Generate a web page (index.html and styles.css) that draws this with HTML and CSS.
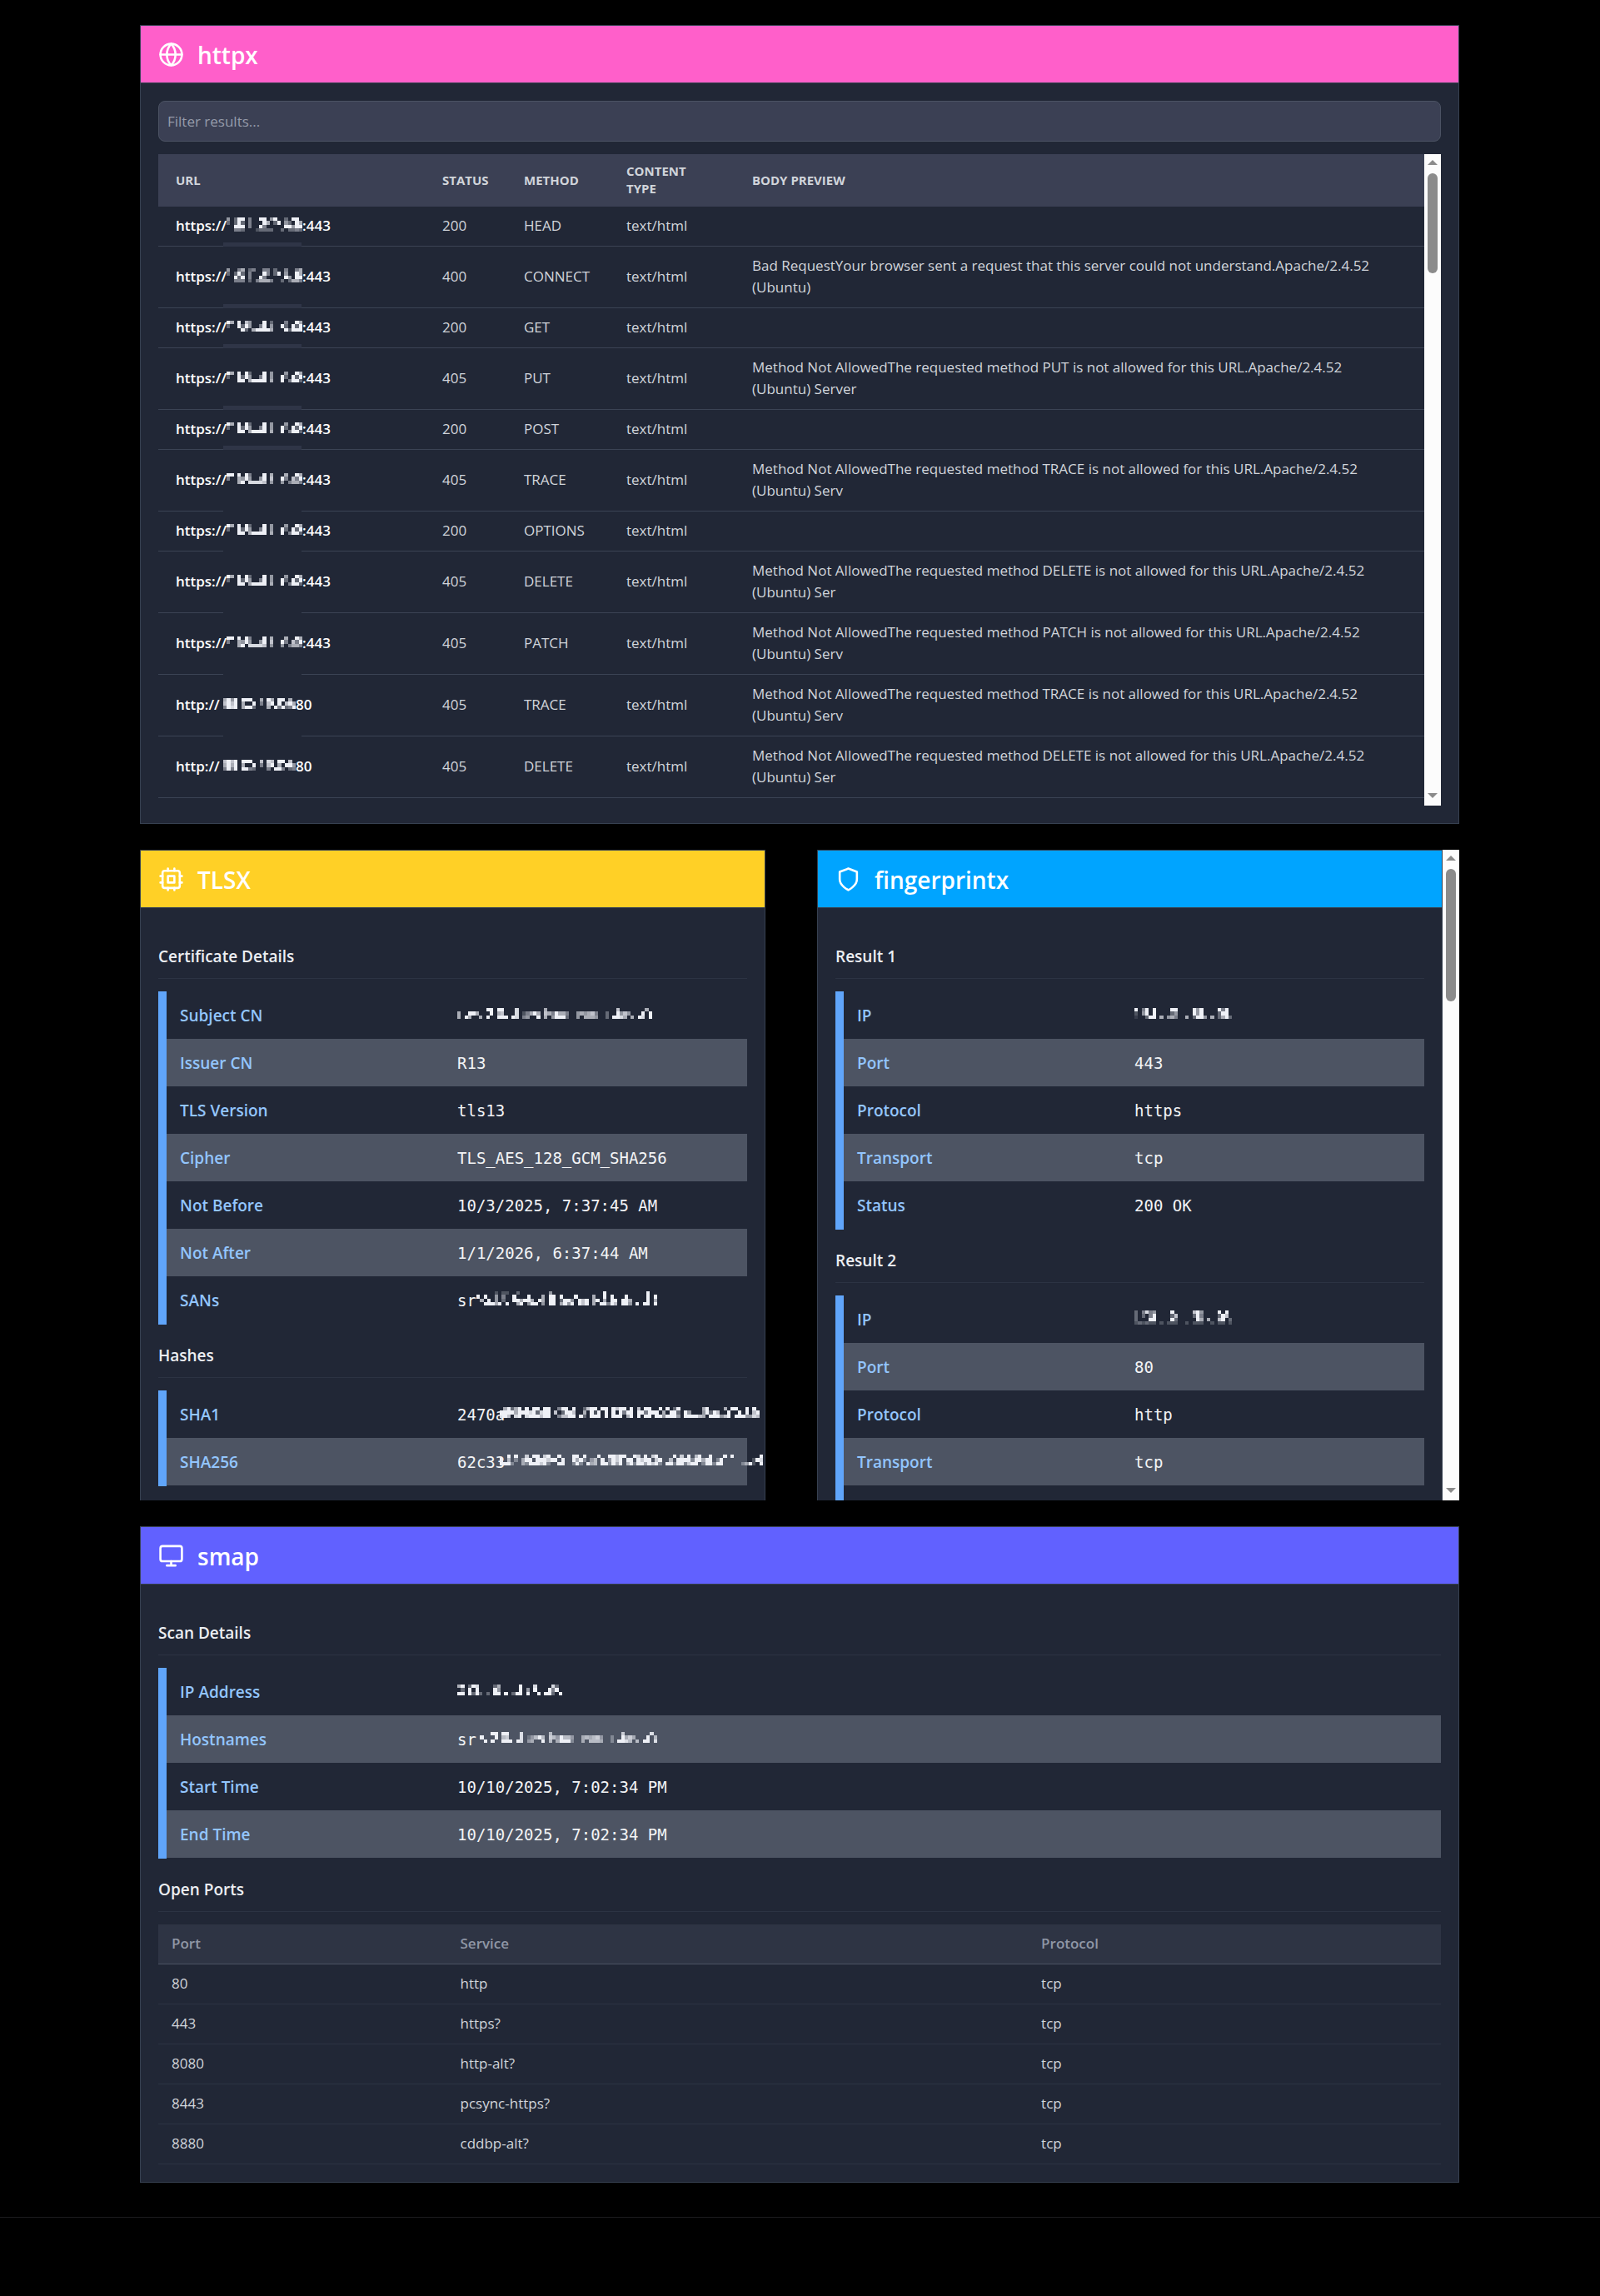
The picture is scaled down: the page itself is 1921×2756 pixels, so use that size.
FILE: index.html
```html
<!DOCTYPE html>
<html lang="en">
<head>
<meta charset="utf-8">
<title>Scan results</title>
<link rel="stylesheet" href="styles.css">
</head>
<body>
<main class="page">
  <section class="card">
    <header class="card-head pink">
      <svg class="icon" viewBox="0 0 24 24"><circle cx="12" cy="12" r="10"/><path d="M12 2a14.5 14.5 0 0 0 0 20 14.5 14.5 0 0 0 0-20M2 12h20"/></svg>
      <h2>httpx</h2>
    </header>
    <div class="card-body">
      <input class="filter" type="text" placeholder="Filter results..." aria-label="Filter results">
      <div class="scroll-area">
        <table class="results">
          <colgroup><col class="c-url"><col class="c-status"><col class="c-method"><col class="c-type"><col></colgroup>
          <thead><tr><th>URL</th><th>Status</th><th>Method</th><th>Content Type</th><th>Body Preview</th></tr></thead>
          <tbody>
            <tr><td><span class="url"><b>https://</b><i class="mosaic" data-rows="503990400990590030990 303930400096039053096 009990400940000099599 004430002333300303343"></i>:443</span><span class="smudge band"></span></td><td>200</td><td>HEAD</td><td>text/html</td><td></td></tr>
            <tr><td><span class="url"><b>https://</b><i class="mosaic" data-rows="500460340044030040046 303930400094039050096 009390400940000095099 004440304666400303664"></i>:443</span><span class="smudge band"></span></td><td>400</td><td>CONNECT</td><td>text/html</td><td>Bad RequestYour browser sent a request that this server could not understand.Apache/2.4.52 (Ubuntu)</td></tr>
            <tr><td><span class="url"><b>https://</b><i class="mosaic" data-rows="960907500090300040096 300939500490500930939 000093069999600093999"></i>:443</span><span class="smudge band"></span></td><td>200</td><td>GET</td><td>text/html</td><td></td></tr>
            <tr><td><span class="url"><b>https://</b><i class="mosaic" data-rows="960909300090500050096 300939500490500930939 000990699990600904993"></i>:443</span><span class="smudge band"></span></td><td>405</td><td>PUT</td><td>text/html</td><td>Method Not AllowedThe requested method PUT is not allowed for this URL.Apache/2.4.52 (Ubuntu) Server</td></tr>
            <tr><td><span class="url"><b>https://</b><i class="mosaic" data-rows="960909300090500050096 300939500490500930939 000990699990600904993"></i>:443</span><span class="smudge band"></span></td><td>200</td><td>POST</td><td>text/html</td><td></td></tr>
            <tr><td><span class="url"><b>https://</b><i class="mosaic" data-rows="990909400090600060096 400659500590700940749 000690888870500504664"></i>:443</span><span class="smudge"></span></td><td>405</td><td>TRACE</td><td>text/html</td><td>Method Not AllowedThe requested method TRACE is not allowed for this URL.Apache/2.4.52 (Ubuntu) Serv</td></tr>
            <tr><td><span class="url"><b>https://</b><i class="mosaic" data-rows="960909300090500050096 300939500490500930939 000990699990600904993"></i>:443</span><span class="smudge"></span></td><td>200</td><td>OPTIONS</td><td>text/html</td><td></td></tr>
            <tr><td><span class="url"><b>https://</b><i class="mosaic" data-rows="960909300090500050096 300939500490500930939 000990699990600904993"></i>:443</span><span class="smudge"></span></td><td>405</td><td>DELETE</td><td>text/html</td><td>Method Not AllowedThe requested method DELETE is not allowed for this URL.Apache/2.4.52 (Ubuntu) Ser</td></tr>
            <tr><td><span class="url"><b>https://</b><i class="mosaic" data-rows="990909400090600060096 400659500590700940749 000690888870500504664"></i>:443</span><span class="smudge"></span></td><td>405</td><td>PATCH</td><td>text/html</td><td>Method Not AllowedThe requested method PATCH is not allowed for this URL.Apache/2.4.52 (Ubuntu) Serv</td></tr>
            <tr><td><span class="url"><b>http://</b><i class="mosaic" data-rows="69590999006096099060 79790600904079090796 49890699300060949349"></i>80</span><span class="smudge"></span></td><td>405</td><td>TRACE</td><td>text/html</td><td>Method Not AllowedThe requested method TRACE is not allowed for this URL.Apache/2.4.52 (Ubuntu) Serv</td></tr>
            <tr><td><span class="url"><b>http://</b><i class="mosaic" data-rows="79790999007087099070 69690600904079060995 49490994300040994034"></i>80</span></td><td>405</td><td>DELETE</td><td>text/html</td><td>Method Not AllowedThe requested method DELETE is not allowed for this URL.Apache/2.4.52 (Ubuntu) Ser</td></tr>
          </tbody>
        </table>
        <div class="scrollbar"><span class="up"></span><span class="thumb"></span><span class="down"></span></div>
      </div>
    </div>
  </section>

  <div class="pair">
    <div class="pane">
      <section class="card">
        <header class="card-head yellow">
          <svg class="icon" viewBox="0 0 24 24"><rect x="4" y="4" width="16" height="16" rx="2"/><rect x="9" y="9" width="6" height="6"/><path d="M15 2v2M15 20v2M2 15h2M2 9h2M20 15h2M20 9h2M9 2v2M9 20v2"/></svg>
          <h2>TLSX</h2>
        </header>
        <div class="card-body">
          <h3>Certificate Details</h3>
          <dl>
            <div><dt>Subject CN</dt><dd><i class="mosaic" data-rows="000000009909900080000000600000000000000000007000000060 600996000906700080246960764966400565674003009575000909 609600609009990980450090605999300506665003099860609809"></i></dd></div>
            <div><dt>Issuer CN</dt><dd>R13</dd></div>
            <div><dt>TLS Version</dt><dd>tls13</dd></div>
            <div><dt>Cipher</dt><dd>TLS_AES_128_GCM_SHA256</dd></div>
            <div><dt>Not Before</dt><dd>10/3/2025, 7:37:45 AM</dd></div>
            <div><dt>Not After</dt><dd>1/1/2026, 6:37:44 AM</dd></div>
            <div><dt>SANs</dt><dd>sr<i class="mosaic" data-rows="00000202200300000000500000000000000900000000000900 90900504009000900060990900090000600909000900000909 06090503009969960960990399509790690609909960000906 00999690900690599050990695909790609949709950909909"></i></dd></div>
          </dl>
          <h3>Hashes</h3>
          <dl>
            <div><dt>SHA1</dt><dd><span class="cut">2470a</span><i class="mosaic" data-rows="069369090990990049909003799099097990907099009090390000006900006099009090020 999969998938990703997006092909090949909949990609930950005939700900909079 897089089997990047799093099909099906909099099599950999976099957909995587"></i></dd></div>
            <div><dt>SHA256</dt><dd><span class="cut">62c33</span><i class="mosaic" data-rows="0090900709907900900099090009009979900970907900009070906900900090900000009 9060305990999799090095930460904979099097990790060999939959903900000000298 9993005399979300990039309560993959069399597930993993799039939900000359209"></i></dd></div>
          </dl>
        </div>
      </section>
    </div>
    <div class="pane wide">
      <section class="card">
        <header class="card-head blue">
          <svg class="icon" viewBox="0 0 24 24"><path d="M12 22s8-4 8-10V5l-8-3-8 3v7c0 6 8 10 8 10z"/></svg>
          <h2>fingerprintx</h2>
        </header>
        <div class="card-body">
          <h3>Result 1</h3>
          <dl>
            <div><dt>IP</dt><dd><i class="mosaic" data-rows="90490900009900009590000949000 20590900003500009590000399000 10039906056400603995060369300"></i></dd></div>
            <div><dt>Port</dt><dd>443</dd></div>
            <div><dt>Protocol</dt><dd>https</dd></div>
            <div><dt>Transport</dt><dd>tcp</dd></div>
            <div><dt>Status</dt><dd>200 OK</dd></div>
          </dl>
          <h3>Result 2</h3>
          <dl>
            <div><dt>IP</dt><dd><i class="mosaic" data-rows="30484500009000007950000909000 30304900003700003940000397000 30009900009300000960600790300 23232202022200202220020220200"></i></dd></div>
            <div><dt>Port</dt><dd>80</dd></div>
            <div><dt>Protocol</dt><dd>http</dd></div>
            <div><dt>Transport</dt><dd>tcp</dd></div>
            <div><dt>Status</dt><dd>301 Moved Permanently</dd></div>
          </dl>
        </div>
      </section>
      <div class="scrollbar"><span class="up"></span><span class="thumb tall"></span><span class="down"></span></div>
    </div>
  </div>

  <section class="card">
    <header class="card-head indigo">
      <svg class="icon" viewBox="0 0 24 24"><rect x="2" y="3" width="20" height="14" rx="2"/><path d="M8 21h8M12 17v4"/></svg>
      <h2>smap</h2>
    </header>
    <div class="card-body">
      <h3>Scan Details</h3>
      <dl>
        <div><dt>IP Address</dt><dd><i class="mosaic" data-rows="69039800003600000900080000830 03090900009500000905090009490 99093930309909039909009099309"></i></dd></div>
        <div><dt>Hostnames</dt><dd>sr<i class="mosaic" data-rows="00009909900080000000600000000000000000007000000080 09000906700080246960764966400565674003009575000906 00909009990980450090605999300506665003099860609908"></i></dd></div>
        <div><dt>Start Time</dt><dd>10/10/2025, 7:02:34 PM</dd></div>
        <div><dt>End Time</dt><dd>10/10/2025, 7:02:34 PM</dd></div>
      </dl>
      <h3>Open Ports</h3>
      <table class="ports">
        <colgroup><col class="p-port"><col class="p-service"><col></colgroup>
        <thead><tr><th>Port</th><th>Service</th><th>Protocol</th></tr></thead>
        <tbody>
          <tr><td>80</td><td>http</td><td>tcp</td></tr>
          <tr><td>443</td><td>https?</td><td>tcp</td></tr>
          <tr><td>8080</td><td>http-alt?</td><td>tcp</td></tr>
          <tr><td>8443</td><td>pcsync-https?</td><td>tcp</td></tr>
          <tr><td>8880</td><td>cddbp-alt?</td><td>tcp</td></tr>
        </tbody>
      </table>
    </div>
  </section>
</main>
<footer class="foot"></footer>
<script src="mosaic.js"></script>
</body>
</html>
```
FILE: styles.css
```css
* { box-sizing: border-box; }
body {
  margin: 0;
  background: #000;
  color: #d1d5db;
  font: 17px/26px "Open Sans", "Noto Sans", sans-serif;
}
h2, h3, dl, dt, dd { margin: 0; font-weight: 600; }

.page {
  margin: 0 169px 0 168px;
  padding: 30px 0 41px;
  display: flex;
  flex-direction: column;
  gap: 31px;
}

/* cards */
.card { background: #212736; border: 1px solid #374151; }
.card-head {
  display: flex;
  align-items: center;
  gap: 16px;
  height: 69px;
  padding: 0 21px;
  border-bottom: 1px solid #374151;
  color: #fff;
}
.card-head h2 { padding-top: 2px; font-size: 28px; line-height: 36px; }
.icon {
  width: 31px;
  height: 31px;
  fill: none;
  stroke: #fff;
  stroke-width: 2;
  stroke-linecap: round;
  stroke-linejoin: round;
}
.pink { background: #ff5fca; }
.yellow { background: #ffd026; }
.blue { background: #00a4ff; }
.indigo { background: #6161ff; }
.card-body { display: flow-root; padding: 21px; }

/* httpx results */
.filter {
  display: block;
  width: 100%;
  height: 49px;
  margin-bottom: 15px;
  padding: 0 10px;
  border: 1px solid #4b5263;
  border-radius: 8px;
  background: #3b4054;
  color: #e5e7eb;
  font: inherit;
}
.filter::placeholder { color: #959baa; opacity: 1; }
.scroll-area { display: flex; height: 782px; overflow: hidden; }
table { border-collapse: separate; border-spacing: 0; table-layout: fixed; }
th, td { text-align: left; overflow-wrap: break-word; }
.results { flex: 1; align-self: flex-start; min-width: 0; }
.c-url { width: 320px; }
.c-status { width: 98px; }
.c-method { width: 123px; }
.c-type { width: 151px; }
.results th {
  padding: 10px 21px 11px;
  background: #3b4054;
  font-size: 15px;
  line-height: 21px;
  font-weight: 700;
  text-transform: uppercase;
}
.results td {
  position: relative;
  padding: 10px 21px 11px;
  border-bottom: 1px solid #3b4354;
}
.results td:nth-child(3) { white-space: nowrap; }
.results td:last-child { padding-right: 60px; }
.url { display: flex; align-items: center; color: #fff; font-weight: 600; }
.url b { min-width: 57px; font-weight: 600; white-space: nowrap; }
.smudge {
  position: absolute;
  left: 78px;
  bottom: -1px;
  width: 94px;
  height: 5px;
  background: #212736;
}
.band { background: #2f3547; }

/* pixelated values */
.mosaic { display: inline-block; flex: none; margin-bottom: 4px; }
.mosaic svg { display: block; }

/* scrollbars */
.scrollbar {
  flex: none;
  display: flex;
  flex-direction: column;
  align-items: center;
  width: 20px;
  padding: 7px 0 9px;
  background: #fcfcfc;
}
.up, .down { border: 6px solid transparent; }
.up { border-top: 0; border-bottom-color: #8b8b8b; }
.down { border-bottom: 0; border-top-color: #8b8b8b; margin-top: auto; }
.thumb { width: 12px; height: 120px; margin-top: 10px; border-radius: 6px; background: #8b8b8b; }
.thumb.tall { height: 159px; }

/* side-by-side panes */
.pair { display: flex; gap: 62px; height: 781px; }
.pane { flex: 1 1 0; min-width: 0; display: flex; overflow: hidden; }
.pane.wide { flex-basis: 20px; }
.pane .card { flex: 1; min-width: 0; align-self: flex-start; min-height: 782px; }

/* key/value lists */
h3 {
  margin: 22px 0 15px;
  padding-bottom: 10px;
  border-bottom: 1px solid #2c3343;
  color: #eceef2;
  font-size: 19px;
  line-height: 31px;
}
dl { border-left: 10px solid #60a5fa; padding-bottom: 1px; }
dl div { display: flex; align-items: center; height: 57px; padding-left: 16px; }
dl div:nth-child(even) { background: #4d5463; }
dt { flex: none; width: 333px; color: #93c5fd; font-size: 19px; }
dd {
  display: flex;
  align-items: center;
  color: #f3f4f6;
  font: 19px/26px "DejaVu Sans Mono", "Liberation Mono", monospace;
  white-space: pre;
}
.cut { width: 51px; }

/* open ports */
.ports { width: 100%; }
.p-port { width: 22.5%; }
.p-service { width: 45.3%; }
.ports th, .ports td { padding: 10px 16px 11px; border-bottom: 1px solid #2c3343; }
.ports th { background: #2e3444; color: #9097a6; font-weight: 600; border-bottom-color: #4b5263; }

.foot { height: 95px; border-top: 1px solid #1c1c1f; }
```
FILE: mosaic.js
```js
// Each digit is the brightness of one block, rows are separated by spaces.
const NS = "http://www.w3.org/2000/svg";
for (const el of document.querySelectorAll(".mosaic")) {
  const rows = el.dataset.rows.split(" ");
  const cols = rows[rows.length - 1].length;
  const svg = document.createElementNS(NS, "svg");
  svg.setAttribute("viewBox", `0 0 ${cols} ${rows.length}`);
  svg.setAttribute("width", Math.round(cols * 13 / 3));
  svg.setAttribute("height", Math.round(rows.length * 13 / 3));
  svg.setAttribute("preserveAspectRatio", "none");
  svg.setAttribute("shape-rendering", "crispEdges");
  rows.forEach((row, y) => [...row].slice(0, cols).forEach((d, x) => {
    if (d === "0") return;
    const r = document.createElementNS(NS, "rect");
    r.setAttribute("x", x);
    r.setAttribute("y", y);
    r.setAttribute("width", 1);
    r.setAttribute("height", 1);
    r.setAttribute("fill", "#eef0f6");
    r.setAttribute("fill-opacity", d / 9);
    svg.append(r);
  }));
  el.append(svg);
}
```
